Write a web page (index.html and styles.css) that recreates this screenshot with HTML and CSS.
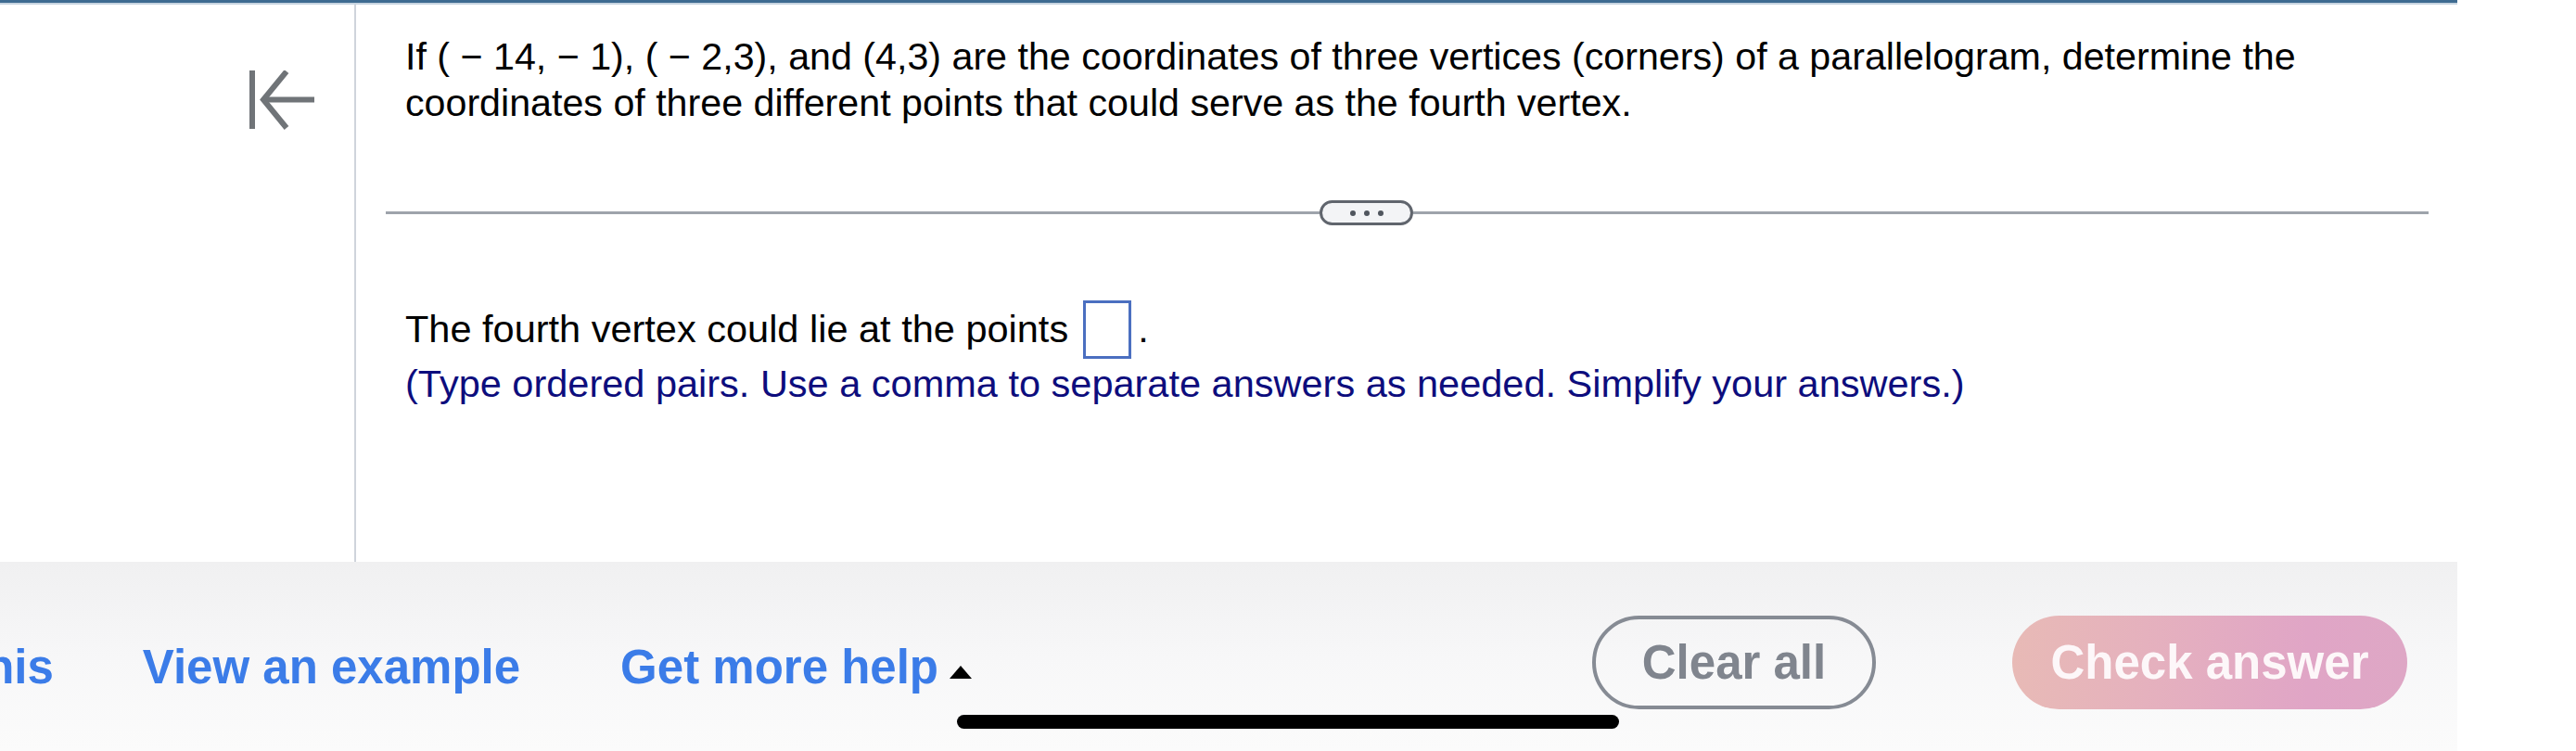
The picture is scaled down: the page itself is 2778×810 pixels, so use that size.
FILE: index.html
```html
<!DOCTYPE html>
<html lang="en">
<head>
<meta charset="utf-8">
<title>Parallelogram question</title>
<link rel="stylesheet" href="styles.css">
</head>
<body>
<div class="app">
  <div class="topbar"></div>
  <div class="main">
    <aside class="side">
      <svg class="collapse-icon" width="72" height="64" viewBox="0 0 72 64" aria-label="Collapse">
        <line x1="3" y1="0" x2="3" y2="63" />
        <line x1="15" y1="31.5" x2="70" y2="31.5" />
        <polyline points="40,1 15,31.5 40,62" />
      </svg>
    </aside>
    <section class="content">
      <p class="question">If ( − 14, − 1), ( − 2,3), and (4,3) are the coordinates of three vertices (corners) of a parallelogram, determine the coordinates of three different points that could serve as the fourth vertex.</p>
      <div class="divider">
        <div class="rule rule-left"></div>
        <div class="pill"><span class="dot"></span><span class="dot"></span><span class="dot"></span></div>
        <div class="rule rule-right"></div>
      </div>
      <p class="answer">The fourth vertex could lie at the points<span class="box"></span><span class="period">.</span></p>
      <p class="hint">(Type ordered pairs. Use a comma to separate answers as needed. Simplify your answers.)</p>
    </section>
  </div>
  <footer class="footer">
    <a class="link link-solve">Help me solve this</a>
    <a class="link link-example">View an example</a>
    <a class="link link-help">Get more help<svg class="caret" width="24" height="14" viewBox="0 0 24 14"><polygon points="12,0 24,14 0,14" /></svg></a>
    <button class="btn btn-clear">Clear all</button>
    <button class="btn btn-check">Check answer</button>
  </footer>
</div>
<div class="home-indicator"></div>
</body>
</html>
```
FILE: styles.css
```css
html, body {
  margin: 0;
  padding: 0;
}
body {
  width: 2778px;
  height: 810px;
  overflow: hidden;
  background: #ffffff;
  font-family: "Liberation Sans", Arial, Helvetica, sans-serif;
  color: #000;
}
.app {
  width: 2650px;
  height: 810px;
  display: flex;
  flex-direction: column;
}
.topbar {
  height: 3px;
  flex: 0 0 auto;
  background: #3e6b91;
  border-bottom: 2px solid #c7d4e0;
}
.main {
  flex: 1 1 auto;
  display: flex;
  min-height: 0;
}
.side {
  width: 384px;
  flex: 0 0 auto;
  box-sizing: border-box;
  border-right: 2px solid #cfd4db;
  padding: 71px 0 0 269px;
}
.collapse-icon {
  display: block;
  fill: none;
  stroke: #707478;
  stroke-width: 6;
}
.content {
  flex: 1 1 auto;
  padding: 31px 31px 0 32px;
}
.question {
  margin: 0;
  padding-left: 21px;
  font-size: 41.2px;
  line-height: 50px;
  color: #000;
}
.divider {
  margin-top: 80px;
  height: 27px;
  display: flex;
  align-items: center;
}
.rule {
  height: 3px;
  background: #9ea3ab;
}
.rule-left {
  width: 1007px;
  flex: 0 0 auto;
}
.rule-right {
  flex: 1 1 auto;
}
.pill {
  width: 101px;
  height: 27px;
  box-sizing: border-box;
  border: 3px solid #60656d;
  border-radius: 14px;
  background: #f3f4f6;
  display: flex;
  align-items: center;
  justify-content: center;
  gap: 9px;
  flex: 0 0 auto;
}
.dot {
  width: 6px;
  height: 6px;
  border-radius: 50%;
  background: #50565e;
}
.answer {
  margin: 81px 0 0 0;
  padding-left: 21px;
  font-size: 41.5px;
  line-height: 50px;
  color: #000;
}
.box {
  display: inline-block;
  width: 52px;
  height: 63px;
  box-sizing: border-box;
  border: 3px solid #4b6fc0;
  vertical-align: -18px;
  margin-left: 16px;
}
.period {
  margin-left: 7px;
}
.hint {
  margin: 2px 0 0 0;
  padding-left: 21px;
  font-size: 41.5px;
  line-height: 50px;
  color: #0d0d7d;
}
.footer {
  height: 204px;
  flex: 0 0 auto;
  box-sizing: border-box;
  padding-top: 13px;
  background: linear-gradient(180deg, #f0f0f1 0%, #f7f7f8 50%, #fbfbfb 100%);
  display: flex;
  align-items: center;
  font-weight: bold;
  font-size: 51px;
  white-space: nowrap;
}
.link {
  color: #3b7ce8;
  padding-top: 10px;
  line-height: normal;
}
.link-solve {
  margin-left: -390px;
}
.link-example {
  margin-left: 96px;
}
.link-help {
  margin-left: 108px;
}
.caret {
  margin-left: 12px;
  vertical-align: 5px;
  fill: #000;
}
.btn {
  height: 101px;
  box-sizing: border-box;
  border-radius: 51px;
  font-family: "Liberation Sans", Arial, Helvetica, sans-serif;
  font-weight: bold;
  font-size: 51px;
  padding: 0;
  display: flex;
  align-items: center;
  justify-content: center;
}
.btn-clear {
  margin-left: auto;
  width: 306px;
  border: 4px solid #868b94;
  background: transparent;
  color: #80858e;
}
.btn-check {
  margin-left: 147px;
  margin-right: 54px;
  width: 426px;
  border: none;
  color: #fdf7f9;
  background: linear-gradient(90deg, #e8bab6 0%, #e4aec0 45%, #e0a5c6 75%, #dea7c5 100%);
}
.home-indicator {
  position: absolute;
  left: 1032px;
  top: 771px;
  width: 714px;
  height: 15px;
  border-radius: 8px;
  background: #000;
}
```
